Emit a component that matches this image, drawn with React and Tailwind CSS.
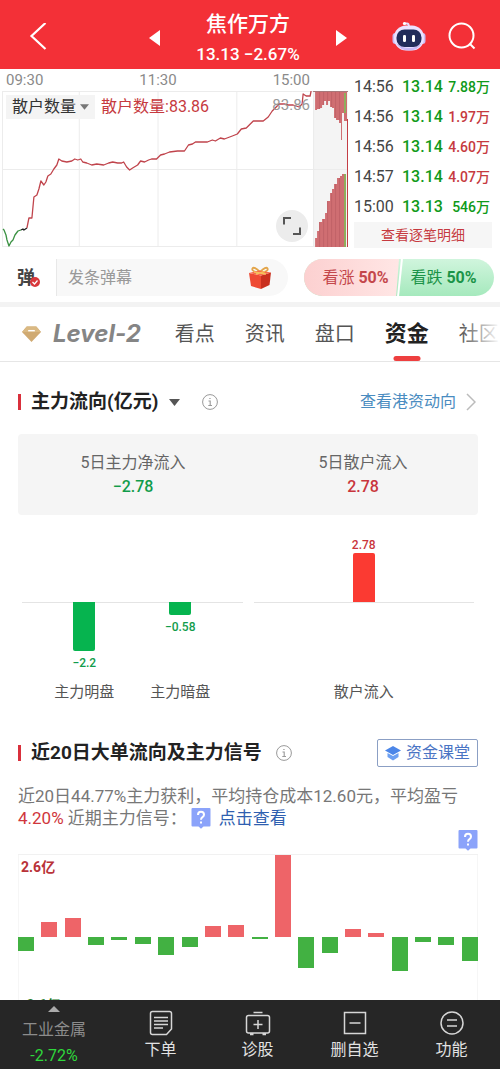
import React, { useState } from 'react';

const trades = [
  { time: '14:56', price: '13.14', volume: '7.88万', up: false },
  { time: '14:56', price: '13.14', volume: '1.97万', up: true },
  { time: '14:56', price: '13.14', volume: '4.60万', up: true },
  { time: '14:57', price: '13.14', volume: '4.07万', up: true },
  { time: '15:00', price: '13.13', volume: '546万', up: false },
];

const tabs = ['看点', '资讯', '盘口', '资金', '社区'];

// bar heights in px, negative = outflow
const dailyFlow = [-14, 15, 19, -8, -3, -7, -18, -10, 11, 12, -2, 82, -31, -16, 8, 4, -34, -5, -8, -24];

const redLine =
  'M25 137L27 127H30L32 106L35 104L37 98L39 90L42 94L44 91L46 85L49 83L52 78L55 74L57 68L60 70L65 71L70 70L73 68L76 69L79 68L81 71L85 72L90 74L95 73L102 74L107 72L111 71L116 72L120 72L122 71L125 76L128 79L131 77L136 74L139 70L143 71L147 69L150 68L155 68L159 64L163 63L168 61L176 60L183 60L187 54L191 53L194 51H206L211 49L214 50L219 47L223 48L231 45L236 43L240 38L245 37L248 34L252 30H262L267 26L271 20L278 13H283L287 14H292L298 16L301 13L302 3L305 5H309L310 0';

const StockChart = () => (
  <svg viewBox="0 0 347 156" preserveAspectRatio="none" className="block h-[156px] w-full">
    <rect x="312" y="0" width="35" height="156" fill="#f4f4f4" />
    <g stroke="#ececec" strokeWidth="1">
      <path d="M0 .5H347M0 78.5H347M0 155.5H347M.5 0V156M77.5 0V156M156.5 0V156M235.5 0V156M312.5 0V156" />
    </g>
    <path d="M314 0H346V30H343V22H341V49H340V32H338V29H335V27H333V17H331V16H329V10H327V14H325V10H323V14H321V17H319V18H316V19H314Z" fill="#cf6e72" />
    <path d="M314 156V147H316V140H318V131H321V128H324V122H326V110H329V102H331V98H333V93H336V87H339V85H341V83H345V156Z" fill="#cf6e72" />
    <g stroke="#b85a60" strokeWidth="1" opacity="0.55">
      <path d="M318.500 0V18M322.500 0V14M326.500 0V10M330.500 0V16M334.500 0V27M338.500 0V29" />
      <path d="M318.500 131V156M322.500 128V156M326.500 110V156M330.500 102V156M334.500 93V156M338.500 87V156" />
    </g>
    <path d="M344 2V22M344 83V156" stroke="#8fae5c" strokeWidth="2" />
    <path d="M346.500 28V156" stroke="#c43c44" strokeWidth="1" />
    <path d="M312 .5H347" stroke="#a8787a" strokeWidth="1" />
    <g fill="none" strokeWidth="1.300" strokeLinejoin="round">
      <path d="M1 138L2 139L4 144L5 149L7 155L9 151L11 149L13 144L16 140L19 139" stroke="#3a9142" />
      <path d="M19 139L21 138L22 139L25 137" stroke="#222" />
      <path d={redLine} stroke="#c0444c" />
    </g>
  </svg>
);

const Robot = () => (
  <svg viewBox="0 0 34 30" className="h-[30px] w-[34px]">
    <path d="M12 2.500H15Q17 2.500 17 6" stroke="#e6dcff" strokeWidth="1.800" fill="none" strokeLinecap="round" />
    <circle cx="12.500" cy="2.500" r="1.600" fill="#fff" />
    <rect x=".5" y="12" width="6" height="11" rx="3" fill="#cdbcf4" />
    <rect x="27.500" y="12" width="6" height="11" rx="3" fill="#cdbcf4" />
    <rect x="2" y="4.500" width="30" height="25" rx="12" fill="#ebe2ff" />
    <path d="M4 22Q8 29.500 17 29.500T30 22Q24 27 17 27T4 22" fill="#c9b8f5" />
    <rect x="4.500" y="8.500" width="25" height="17.500" rx="8" fill="#222c5a" />
    <rect x="11" y="14" width="3" height="7" rx="1.200" fill="#fff" />
    <rect x="20" y="14" width="3" height="7" rx="1.200" fill="#fff" />
  </svg>
);

const Gift = () => (
  <svg viewBox="0 0 24 24" className="h-6 w-6">
    <path d="M12 6Q6 0 4.500 2.500T11 7M12 6Q18 0 19.500 2.500T13 7" fill="none" stroke="#e3a54a" strokeWidth="1.800" />
    <path d="M1 7L13 9.500V23L3 20Z" fill="#ee4a33" />
    <path d="M13 9.500L23 6.500L21.500 19L13 23Z" fill="#c9301f" />
    <path d="M1 7L11 4.500L23 6.500L13 9.500Z" fill="#f8694a" />
    <path d="M6 6L18 8M8 8L17 5.500" stroke="#f5c05c" strokeWidth="1.500" />
  </svg>
);

const InfoIcon = () => (
  <svg viewBox="0 0 16 16" className="h-4 w-4" fill="none" stroke="#999">
    <circle cx="8" cy="8" r="7.400" />
    <path d="M6.500 7H8.200V11.500M6.300 11.500H10M7.300 4.500H8.600" strokeWidth="1.100" />
  </svg>
);

const QuestionIcon = () => (
  <svg viewBox="0 0 20 22" className="inline-block h-[22px] w-5 shrink-0">
    <path d="M1.500 1H18.500Q19.500 1 19.500 2V18.500Q19.500 19.500 18.500 19.500H12.500L10 21.800L7.500 19.500H1.500Q.5 19.500 .5 18.500V2Q.5 1 1.500 1Z" fill="#8ba3fa" />
    <path d="M7 8Q7 4.800 10 4.800T13 7.800Q13 9.300 11.500 10.200T10 12.800" fill="none" stroke="#fff" strokeWidth="2" />
    <rect x="9" y="14.500" width="2" height="2" fill="#fff" />
  </svg>
);

const SectionTitle = ({ children }) => (
  <h2 className="flex items-center gap-[10px] text-[19px] leading-7 font-bold text-[#222]">
    <span className="h-4 w-[3px] bg-[#d9303c]" />
    {children}
  </h2>
);

const FlowBar = ({ name, value, height }) => {
  const up = value > 0;
  return (
    <div className="flex w-15 flex-col items-center">
      <div className="flex h-[72px] flex-col items-center justify-end">
        {up && (
          <>
            <span className="text-xs leading-4 font-medium text-[#c9353c]">{value}</span>
            <span className="w-[22px] rounded-t-xs bg-[#fb3a32]" style={{ height }} />
          </>
        )}
      </div>
      <div className="flex h-[78px] flex-col items-center gap-1">
        {!up && (
          <>
            <span className="w-[22px] rounded-b-xs bg-[#06b44f]" style={{ height }} />
            <span className="text-xs leading-4 font-medium text-[#119c4b]">{String(value).replace('-', '−')}</span>
          </>
        )}
      </div>
      <span className="text-[15px] leading-6 whitespace-nowrap text-[#555]">{name}</span>
    </div>
  );
};

// Baseline runs through the middle of each panel
const FlowPanel = ({ children }) => (
  <div className="relative flex flex-1 justify-center">
    <span className="absolute inset-x-0 top-[72px] h-px bg-[#e4e4e4]" />
    <div className="relative flex gap-9">{children}</div>
  </div>
);

const NavItem = ({ label, children }) => (
  <button className="flex flex-1 flex-col items-center pt-[10px] text-base leading-6 text-[#e2e2e2]">
    <svg viewBox="0 0 26 26" className="mb-0.5 h-[26px] w-[26px]" fill="none" stroke="#d6d6d6" strokeWidth="1.500">
      {children}
    </svg>
    {label}
  </button>
);

const App = () => {
  const [activeTab, setActiveTab] = useState('资金');
  const [comment, setComment] = useState('');

  return (
    <div className="flex h-screen flex-col overflow-hidden bg-white font-[Roboto,'Noto_Sans_CJK_SC',sans-serif]">
      {/* Header */}
      <header className="grid shrink-0 grid-cols-[1fr_auto_1fr] items-center bg-[#f33037] pt-2 pr-6 pb-px pl-5 text-white">
        <button aria-label="返回" className="ml-2 w-6">
          <svg viewBox="0 0 24 30" className="h-[30px] w-6" fill="none" stroke="#fff" strokeWidth="2.200">
            <path d="M17.500 0L3.500 13L17.500 26" />
          </svg>
        </button>
        <div className="flex items-center gap-9">
          <button aria-label="上一只">
            <svg viewBox="0 0 11 16" className="h-4 w-[11px]"><path d="M11 0V16L0 8Z" fill="#fff" /></svg>
          </button>
          <div className="text-center">
            <h1 className="text-[21px] leading-8 font-medium">焦作万方</h1>
            <p className="text-[17px] leading-7 font-medium">13.13 −2.67%</p>
          </div>
          <button aria-label="下一只">
            <svg viewBox="0 0 11 16" className="h-4 w-[11px]"><path d="M0 0V16L11 8Z" fill="#fff" /></svg>
          </button>
        </div>
        <div className="flex items-center justify-end gap-[22px] pb-1">
          <button aria-label="智能助手"><Robot /></button>
          <button aria-label="搜索">
            <svg viewBox="0 0 28 28" className="h-7 w-7" fill="none" stroke="#fff" strokeWidth="2">
              <circle cx="13.500" cy="13.500" r="12" />
              <path d="M21.500 21.500L26.500 26.500" />
            </svg>
          </button>
        </div>
      </header>

      <main className="min-h-0 flex-1 overflow-y-auto [scrollbar-width:none]">
        {/* Intraday chart and trades */}
        <section className="flex gap-[6px] pr-2 pl-0.5">
          <div className="min-w-0 flex-1">
            <div className="mr-[38px] ml-1 flex justify-between text-[15px] leading-[22px] text-[#8a8a8a]">
              <span>09:30</span>
              <span>11:30</span>
              <span>15:00</span>
            </div>
            <div className="relative">
              <StockChart />
              <span className="absolute top-1 right-[38px] text-[15px] leading-5 text-[#999]">83.86</span>
              <div className="absolute top-1 left-1 flex items-center gap-[6px] text-base leading-6">
                <button className="flex items-center gap-1 bg-[#f4f4f4] px-[6px] text-[#333]">
                  散户数量
                  <svg viewBox="0 0 10 6" className="h-[6px] w-[9px]"><path d="M0 0H10L5 6Z" fill="#777" /></svg>
                </button>
                <span className="text-[#c63a40]">散户数量:83.86</span>
              </div>
              <button aria-label="全屏" className="absolute right-10 bottom-[5px] flex h-8 w-8 items-center justify-center rounded-full bg-[#ececec]">
                <svg viewBox="0 0 18 18" className="h-[18px] w-[18px]" fill="none" stroke="#555" strokeWidth="2">
                  <path d="M1 7.500V1H8M17 10.500V17H10" />
                </svg>
              </button>
            </div>
          </div>
          <div className="flex w-[138px] flex-col pt-[3px]">
            <table className="w-full">
              <tbody>
                {trades.map((trade, i) => (
                  <tr key={i} className="h-[30px] text-base leading-[30px]">
                    <td className="w-12 p-0 text-[#444]">{trade.time}</td>
                    <td className="p-0 font-medium text-[#0f9a1a]">{trade.price}</td>
                    <td className={`p-0 pr-0.5 text-right text-sm leading-[30px] font-medium ${trade.up ? 'text-[#c63a40]' : 'text-[#0f9a1a]'}`}>
                      {trade.volume}
                    </td>
                  </tr>
                ))}
              </tbody>
            </table>
            <button className="bg-[#f6f6f6] text-sm leading-[26px] text-[#c63a40]">查看逐笔明细</button>
          </div>
        </section>

        {/* Comment box and votes */}
        <section className="flex items-center gap-4 border-b-[5px] border-[#f3f3f3] pt-[11px] pr-[6px] pb-[6px]">
          <div className="flex h-[37px] min-w-0 flex-1 items-center rounded-r-full bg-[#f8f8f8] pr-4">
            <button aria-label="弹幕开关" className="relative h-full w-[57px] border-r border-[#e8e8e8] bg-white pr-1 text-lg leading-8 font-bold text-[#444]">
              弹
              <svg viewBox="0 0 10 10" className="absolute top-[18px] left-[30px] h-[10px] w-[10px]">
                <circle cx="5" cy="5" r="5" fill="#d8383c" />
                <path d="M2.500 5L4.500 7L7.500 3.500" fill="none" stroke="#fff" strokeWidth="1.200" />
              </svg>
            </button>
            <input
              aria-label="发条弹幕"
              placeholder="发条弹幕"
              value={comment}
              onChange={(e) => setComment(e.target.value)}
              className="h-full min-w-0 flex-1 bg-transparent pl-[11px] text-base text-[#444] outline-none placeholder:text-[#999]"
            />
            <button aria-label="礼物"><Gift /></button>
          </div>
          <div className="flex h-[37px] w-[190px] overflow-hidden rounded-full bg-gradient-to-b from-[#d0f5dd] to-[#a5e9bd] text-base">
            <button className="w-1/2 bg-gradient-to-r from-[#fcd0d0] to-[#ffe6e5] pl-2 text-[#c4474b] [clip-path:polygon(0_0,100%_0,97%_100%,0_100%)]">
              看涨 <b>50%</b>
            </button>
            <span className="w-[2px] -skew-x-6 bg-white" />
            <button className="flex-1 pr-2 text-[#1b9448]">
              看跌 <b>50%</b>
            </button>
          </div>
        </section>

        {/* Tabs */}
        <nav className="relative flex items-center overflow-hidden border-b border-[#e6e6e6] pl-[22px] text-xl">
          <svg viewBox="0 0 20 18" className="mr-3 h-[18px] w-[19px] shrink-0">
            <path d="M5 1H15L20 7L10 17.500L0 7Z" fill="#d0aa72" />
            <path d="M5 1H15L20 7H0Z" fill="#dab983" />
            <path d="M6.500 5.500H13.500" stroke="#fff" strokeWidth="1.500" />
          </svg>
          <a href="#level2" className="mr-[34px] font-[Inter] text-2xl leading-[54px] font-bold text-[#858585] italic">Level-2</a>
          <div className="flex gap-[30px]">
            {tabs.map((tab) => (
              <button
                key={tab}
                onClick={() => setActiveTab(tab)}
                className={`relative h-[54px] shrink-0 ${activeTab === tab ? 'text-[22px] font-bold text-[#222]' : 'text-[#555]'}`}
              >
                {tab}
                {activeTab === tab && (
                  <span className="absolute bottom-0 left-1/2 h-[5px] w-[27px] -translate-x-1/2 rounded-full bg-[#ee3f3f]" />
                )}
              </button>
            ))}
          </div>
          <div className="pointer-events-none absolute inset-y-0 right-0 w-10 bg-gradient-to-l from-white to-transparent" />
        </nav>

        {/* Main capital flow */}
        <section className="pt-[26px] pr-[22px] pl-[18px]">
          <div className="flex items-center">
            <SectionTitle>主力流向(亿元)</SectionTitle>
            <button aria-label="切换单位" className="ml-[11px]">
              <svg viewBox="0 0 11 7" className="h-[7px] w-[11px]"><path d="M0 0H11L5.500 7Z" fill="#555" /></svg>
            </button>
            <button aria-label="说明" className="ml-[22px]"><InfoIcon /></button>
            <a href="#hk" className="ml-auto flex items-center gap-[10px] text-base text-[#4a8cc0]">
              查看港资动向
              <svg viewBox="0 0 10 18" className="mr-0.5 h-[18px] w-[10px]" fill="none" stroke="#bbb" strokeWidth="1.500">
                <path d="M1 1L9 9L1 17" />
              </svg>
            </a>
          </div>

          <div className="mt-[18px] grid grid-cols-2 rounded-sm bg-[#f5f5f5] pt-[17px] pb-4 text-center text-base leading-6">
            <div>
              <p className="text-[#666]">5日主力净流入</p>
              <p className="font-medium text-[#119c4b]">−2.78</p>
            </div>
            <div>
              <p className="text-[#666]">5日散户流入</p>
              <p className="font-medium text-[#c9353c]">2.78</p>
            </div>
          </div>

          <div className="flex gap-[11px] px-1 pt-[15px]">
            <FlowPanel>
              <FlowBar name="主力明盘" value={-2.2} height={49} />
              <FlowBar name="主力暗盘" value={-0.58} height={13} />
            </FlowPanel>
            <FlowPanel>
              <FlowBar name="散户流入" value={2.78} height={49} />
            </FlowPanel>
          </div>
        </section>

        {/* Large orders, last 20 days */}
        <section className="pt-[35px] pr-[22px] pl-[18px]">
          <div className="flex items-center">
            <SectionTitle>近20日大单流向及主力信号</SectionTitle>
            <button aria-label="说明" className="ml-[14px]"><InfoIcon /></button>
            <button className="ml-auto flex items-center gap-[5px] rounded-xs border border-[#8b9fc4] px-[7px] text-base leading-[26px] text-[#4a74c4]">
              <svg viewBox="0 0 16 16" className="h-4 w-4" fill="#4c86e8">
                <path d="M8 1L16 5.500L8 10L0 5.500Z" />
                <path d="M2.500 8L8 11L13.500 8V12L8 15.500L2.500 12Z" fill="#6da0f2" />
              </svg>
              资金课堂
            </button>
          </div>
          <p className="mt-[18px] text-[17px] leading-[22px] text-[#777]">
            近20日44.77%主力获利，平均持仓成本12.60元，平均盈亏
            <span className="text-[#d0363c]">4.20%</span> 近期主力信号：
            <a href="#signal" className="ml-1 inline-flex h-[22px] items-center gap-2 align-top text-[#2f5fb0]">
              <QuestionIcon />
              点击查看
            </a>
          </p>
          <div className="flex justify-end">
            <button aria-label="图例说明" className="flex"><QuestionIcon /></button>
          </div>
          <div className="relative mt-[3px] flex h-[161px] justify-between border-t border-[#f1f1f1]">
            <span className="absolute inset-x-0 inset-y-0 border-x border-[#f6f6f6]" />
            <span className="absolute top-0.5 left-[3px] text-sm leading-5 font-bold text-[#b93238]">2.6亿</span>
            <span className="absolute bottom-0 left-[3px] text-sm leading-5 font-bold text-[#1f7a28]">-2.6亿</span>
            {dailyFlow.map((h, i) => (
              <div key={i} className="relative flex w-4 flex-col">
                <div className="flex h-[82px] items-end">
                  {h > 0 && <span className="w-full bg-[#ee6468]" style={{ height: h }} />}
                </div>
                {h < 0 && <span className="w-full bg-[#42b142]" style={{ height: -h }} />}
              </div>
            ))}
          </div>
        </section>
      </main>

      {/* Bottom bar */}
      <footer className="flex h-[69px] shrink-0 bg-[#262626]">
        <button className="flex w-28 flex-col items-center pt-[6px] pr-1 text-base text-[#8c8c8c]">
          <svg viewBox="0 0 12 6" className="h-[6px] w-3"><path d="M6 0L12 6H0Z" fill="#aaa" /></svg>
          <span className="mt-1 leading-7">工业金属</span>
          <span className="leading-6 text-[#2fd83c]">-2.72%</span>
        </button>
        <NavItem label="下单">
          <path d="M4.500 1.500H21.500Q23.500 1.500 23.500 3.500V19L18.500 24.500H4.500Q2.500 24.500 2.500 22.500V3.500Q2.500 1.500 4.500 1.500ZM6 7.500H20M6 11H20M6 14.500H20M6 18H15" />
        </NavItem>
        <NavItem label="诊股">
          <path d="M3.500 5.500H22.500Q24.500 5.500 24.500 7.500V21Q24.500 23 22.500 23H3.500Q1.500 23 1.500 21V7.500Q1.500 5.500 3.500 5.500ZM8.500 2.500H17.500M13 10V19M8.500 14.500H17.500M5 24.500H8.500M17.500 24.500H21" />
        </NavItem>
        <NavItem label="删自选">
          <path d="M2.500 2.500H23.500V23.500H2.500ZM7.500 13H18.500" />
        </NavItem>
        <NavItem label="功能">
          <circle cx="13" cy="13" r="11" />
          <path d="M8 10H18M8 16H18" />
        </NavItem>
      </footer>
    </div>
  );
};

export default App;
